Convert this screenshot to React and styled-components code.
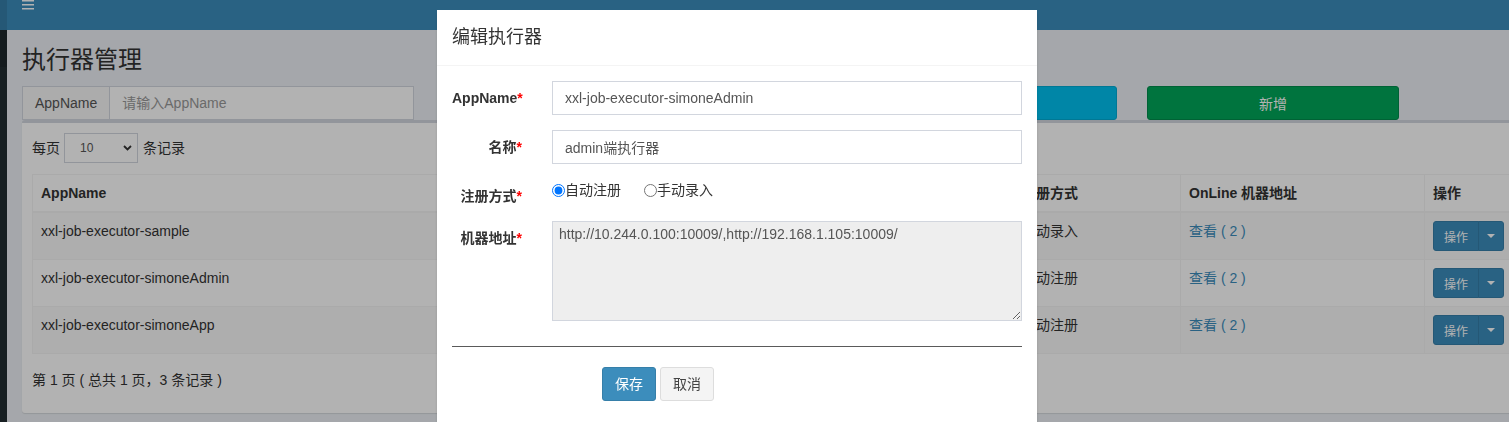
import React from "react";
import styled, { createGlobalStyle } from "styled-components";

const GlobalStyle = createGlobalStyle`
  * { box-sizing: border-box; }
  html, body { margin: 0; padding: 0; overflow: hidden; }
  body {
    background: #ecf0f5;
    color: #333;
    font-family: "Liberation Sans", "Noto Sans CJK SC", sans-serif;
    font-size: 14px;
    line-height: 20px;
  }
`;

const Wrapper = styled.div`
  display: flex;
  width: 1695px;
  height: 422px;
`;

const Sidebar = styled.aside`
  width: 7px;
  flex-shrink: 0;
  display: flex;
  flex-direction: column;
  background: #222d32;
`;

const SidebarBand = styled.div`
  height: ${p => p.$h}px;
  background: ${p => p.$bg};
`;

const Main = styled.div`
  flex: 1;
  display: flex;
  flex-direction: column;
  min-width: 0;
  background: #ecf0f5;
`;

const TopBar = styled.header`
  height: 30px;
  flex-shrink: 0;
  background: #3c8dbc;
  padding-left: 15px;
  line-height: 0;
`;

const Content = styled.section`
  padding: 15px;
`;

const PageTitle = styled.h1`
  margin: 0;
  font-family: "Noto Sans CJK SC", sans-serif;
  font-size: 24px;
  font-weight: 400;
  line-height: 26px;
`;

const SearchRow = styled.div`
  display: flex;
  margin: 15px -15px 0;
`;

const Col = styled.div`
  width: ${p => (p.$span / 12) * 100}%;
  padding: 0 15px;
`;

const InputGroup = styled.div`
  display: flex;
  height: 34px;
`;

const Addon = styled.span`
  padding: 6px 12px;
  border: 1px solid #d2d6de;
  border-right: 0;
  background: #f6f6f6;
  color: #555;
  white-space: nowrap;
`;

const SearchInput = styled.input`
  flex: 1;
  min-width: 0;
  border: 1px solid #d2d6de;
  padding: 6px 12px;
  font: 14px "Liberation Sans", "Noto Sans CJK SC", sans-serif;
  color: #555;
  outline: none;
  &::placeholder { color: #999; }
`;

const BlockButton = styled.button`
  display: block;
  width: 100%;
  height: 34px;
  border: 1px solid ${p => (p.$kind === "success" ? "#008d4c" : "#00acd6")};
  border-radius: 3px;
  background: ${p => (p.$kind === "success" ? "#00a65a" : "#00c0ef")};
  color: #fff;
  font: 14px "Liberation Sans", "Noto Sans CJK SC", sans-serif;
`;

const Box = styled.div`
  border-top: 3px solid #d2d6de;
  border-radius: 3px;
  background: #fff;
  box-shadow: 0 1px 1px rgba(0, 0, 0, 0.1);
  padding: 10px;
`;

const LengthRow = styled.div`
  display: flex;
  align-items: center;
  height: 30px;
`;

const FakeSelect = styled.div`
  display: flex;
  align-items: center;
  justify-content: space-between;
  width: 74px;
  height: 30px;
  margin: 0 5px 0 4px;
  padding: 0 5px 0 15px;
  border: 1px solid #d2d6de;
  background: #fff;
  font-size: 12px;
  color: #555;
`;

const Table = styled.table`
  width: 100%;
  margin-top: 11px;
  border-collapse: collapse;
  table-layout: fixed;

  th, td {
    border: 1px solid #f4f4f4;
    padding: 8px;
    text-align: left;
    vertical-align: top;
    line-height: 20px;
    white-space: nowrap;
    overflow: hidden;
  }
  th {
    font-weight: 700;
    border-bottom-width: 2px;
  }
  tbody tr:nth-child(odd) td { background: #f9f9f9; }
`;

const Link = styled.a`
  color: #3c8dbc;
  text-decoration: none;
`;

const BtnGroup = styled.div`
  display: inline-flex;
  height: 30px;
`;

const SmallButton = styled.button`
  height: 30px;
  padding: 0 ${p => (p.$caret ? "8px" : "10px")};
  border: 1px solid #367fa9;
  border-radius: ${p => (p.$caret ? "0 3px 3px 0" : "3px 0 0 3px")};
  margin-left: ${p => (p.$caret ? "-1px" : "0")};
  background: #3c8dbc;
  color: #fff;
  font: 12px "Liberation Sans", "Noto Sans CJK SC", sans-serif;
  display: flex;
  align-items: center;
`;

const Caret = styled.span`
  width: 0;
  height: 0;
  border-top: 4px solid #fff;
  border-left: 4px solid transparent;
  border-right: 4px solid transparent;
`;

const Info = styled.div`
  padding: 16px 0 13px;
`;

const Backdrop = styled.div`
  position: fixed;
  inset: 0;
  background: rgba(0, 0, 0, 0.3);
`;

const Modal = styled.div`
  position: fixed;
  top: 10px;
  left: 437px;
  width: 600px;
  background: #fff;
  box-shadow: 0 2px 3px rgba(0, 0, 0, 0.125);
`;

const ModalHeader = styled.div`
  padding: 15px;
  border-bottom: 1px solid #f4f4f4;
`;

const ModalTitle = styled.h4`
  margin: 0;
  font-size: 18px;
  font-weight: 400;
  line-height: 25px;
  color: #333;
`;

const ModalBody = styled.div`
  padding: 15px 15px 40px;
`;

const FormGroup = styled.div`
  display: flex;
  margin: 0 -15px 15px;
`;

const Label = styled.label`
  width: 100px;
  flex-shrink: 0;
  padding: 7px 15px 0;
  text-align: right;
  font-weight: 700;
  white-space: nowrap;
`;

const Req = styled.span`
  color: #f00;
`;

const Field = styled.div`
  width: 500px;
  padding: 0 15px;
`;

const TextInput = styled.input`
  display: block;
  width: 100%;
  height: 34px;
  padding: 6px 12px;
  border: 1px solid #d2d6de;
  font: 14px "Liberation Sans", "Noto Sans CJK SC", sans-serif;
  color: #555;
  outline: none;
`;

const RadioRow = styled.div`
  display: flex;
  gap: 23px;
  padding-top: 1px;
`;

const RadioLabel = styled.label`
  display: inline-flex;
  align-items: center;
  line-height: 20px;
  color: #333;

  input {
    width: 13px;
    height: 13px;
    margin: 0;
  }
`;

const TextArea = styled.textarea`
  display: block;
  width: 100%;
  height: 100px;
  padding: 2px 6px;
  border: 1px solid #d2d6de;
  background: #eee;
  font: 14px/20px "Liberation Sans", "Noto Sans CJK SC", sans-serif;
  color: #555;
  resize: vertical;
  outline: none;
`;

const Rule = styled.hr`
  margin: 25px 0 20px;
  border: 0;
  border-top: 1px solid #5a5a5a;
`;

const Actions = styled.div`
  display: flex;
  gap: 4px;
  padding-left: 150px;
`;

const ActionButton = styled.button`
  height: 34px;
  padding: 6px 12px;
  border: 1px solid ${p => (p.$primary ? "#367fa9" : "#ddd")};
  border-radius: 3px;
  background: ${p => (p.$primary ? "#3c8dbc" : "#f4f4f4")};
  color: ${p => (p.$primary ? "#fff" : "#444")};
  font: 14px/20px "Liberation Sans", "Noto Sans CJK SC", sans-serif;
`;

const rows = [
  { app: "xxl-job-executor-sample", name: "示例执行器", type: "手动录入" },
  { app: "xxl-job-executor-simoneAdmin", name: "admin端执行器", type: "自动注册" },
  { app: "xxl-job-executor-simoneApp", name: "app端执行器", type: "自动注册" },
];

export default function App() {
  return (
    <>
      <GlobalStyle />
      <Wrapper>
        <Sidebar>
          <SidebarBand $h={30} $bg="#367fa9" />
          <SidebarBand $h={37} $bg="#1e282c" />
        </Sidebar>
        <Main>
          <TopBar>
            <svg width="12" height="10" viewBox="0 0 12 10">
              <rect x="0" y="0" width="12" height="1.5" fill="#fff" />
              <rect x="0" y="4" width="12" height="1.5" fill="#fff" />
              <rect x="0" y="8" width="12" height="1.5" fill="#fff" />
            </svg>
          </TopBar>
          <Content>
            <PageTitle>执行器管理</PageTitle>
            <SearchRow>
              <Col $span={3}>
                <InputGroup>
                  <Addon>AppName</Addon>
                  <SearchInput placeholder="请输入AppName" />
                </InputGroup>
              </Col>
              <Col $span={3}>
                <InputGroup>
                  <Addon>名称</Addon>
                  <SearchInput />
                </InputGroup>
              </Col>
              <Col $span={2}>
                <BlockButton $kind="info">搜索</BlockButton>
              </Col>
              <Col $span={2}>
                <BlockButton $kind="success">新增</BlockButton>
              </Col>
            </SearchRow>
            <Box>
              <LengthRow>
                每页
                <FakeSelect>
                  <span>10</span>
                  <svg width="9" height="6" viewBox="0 0 9 6">
                    <path d="M1 1 L4.5 4.5 L8 1" fill="none" stroke="#333" strokeWidth="1.8" />
                  </svg>
                </FakeSelect>
                条记录
              </LengthRow>
              <Table>
                <colgroup>
                  <col style={{ width: 488 }} />
                  <col style={{ width: 493 }} />
                  <col style={{ width: 167 }} />
                  <col style={{ width: 244 }} />
                  <col />
                </colgroup>
                <thead>
                  <tr>
                    <th>AppName</th>
                    <th>名称</th>
                    <th>注册方式</th>
                    <th>OnLine 机器地址</th>
                    <th>操作</th>
                  </tr>
                </thead>
                <tbody>
                  {rows.map(r => (
                    <tr key={r.app}>
                      <td>{r.app}</td>
                      <td>{r.name}</td>
                      <td>{r.type}</td>
                      <td>
                        <Link href="#">查看 ( 2 )</Link>
                      </td>
                      <td>
                        <BtnGroup>
                          <SmallButton>操作</SmallButton>
                          <SmallButton $caret>
                            <Caret />
                          </SmallButton>
                        </BtnGroup>
                      </td>
                    </tr>
                  ))}
                </tbody>
              </Table>
              <Info>第 1 页 ( 总共 1 页，3 条记录 )</Info>
            </Box>
          </Content>
        </Main>
      </Wrapper>

      <Backdrop />
      <Modal>
        <ModalHeader>
          <ModalTitle>编辑执行器</ModalTitle>
        </ModalHeader>
        <ModalBody>
          <FormGroup>
            <Label>
              AppName<Req>*</Req>
            </Label>
            <Field>
              <TextInput defaultValue="xxl-job-executor-simoneAdmin" />
            </Field>
          </FormGroup>
          <FormGroup>
            <Label>
              名称<Req>*</Req>
            </Label>
            <Field>
              <TextInput defaultValue="admin端执行器" />
            </Field>
          </FormGroup>
          <FormGroup>
            <Label>
              注册方式<Req>*</Req>
            </Label>
            <Field>
              <RadioRow>
                <RadioLabel>
                  <input type="radio" name="addressType" defaultChecked />
                  自动注册
                </RadioLabel>
                <RadioLabel>
                  <input type="radio" name="addressType" />
                  手动录入
                </RadioLabel>
              </RadioRow>
            </Field>
          </FormGroup>
          <FormGroup>
            <Label>
              机器地址<Req>*</Req>
            </Label>
            <Field>
              <TextArea readOnly defaultValue="http://10.244.0.100:10009/,http://192.168.1.105:10009/" />
            </Field>
          </FormGroup>
          <Rule />
          <Actions>
            <ActionButton $primary>保存</ActionButton>
            <ActionButton>取消</ActionButton>
          </Actions>
        </ModalBody>
      </Modal>
    </>
  );
}
